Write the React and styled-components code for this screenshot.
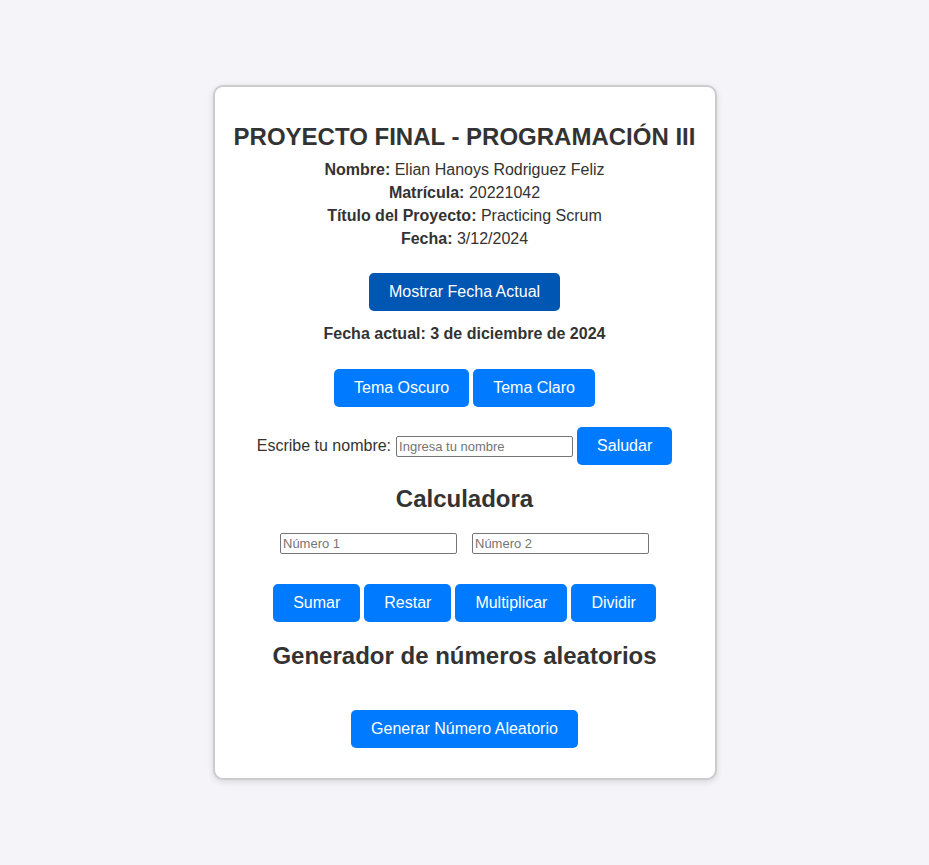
import React from "react";
import styled, { createGlobalStyle } from "styled-components";

const GlobalStyle = createGlobalStyle`
	html, body {
		margin: 0;
		padding: 0;
	}
	body {
		background: #f4f4f9;
		font-family: "Liberation Sans", Arial, sans-serif;
		color: #333;
	}
`;

const App = () => {
	const [fecha, setFecha] = React.useState("3 de diciembre de 2024");
	const [nombre, setNombre] = React.useState("");
	const [n1, setN1] = React.useState("");
	const [n2, setN2] = React.useState("");

	return (
		<Page>
			<GlobalStyle />
			<Card>
				<Title>PROYECTO FINAL - PROGRAMACIÓN III</Title>
				<Info>
					<Line>
						<b>Nombre:</b> Elian Hanoys Rodriguez Feliz
					</Line>
					<Line>
						<b>Matrícula:</b> 20221042
					</Line>
					<Line>
						<b>Título del Proyecto:</b> Practicing Scrum
					</Line>
					<Line>
						<b>Fecha:</b> 3/12/2024
					</Line>
				</Info>

				<Section $top={25}>
					<Button $dark onClick={() => setFecha(fecha)}>
						Mostrar Fecha Actual
					</Button>
				</Section>
				<CurrentDate>Fecha actual: {fecha}</CurrentDate>

				<Row $top={26} $gap={4}>
					<Button>Tema Oscuro</Button>
					<Button>Tema Claro</Button>
				</Row>

				<Row $top={20} $gap={4}>
					<Label htmlFor="nombre">Escribe tu nombre:</Label>
					<Input
						id="nombre"
						placeholder="Ingresa tu nombre"
						value={nombre}
						onChange={(e) => setNombre(e.target.value)}
					/>
					<Button>Saludar</Button>
				</Row>

				<Subtitle $top={20}>Calculadora</Subtitle>
				<Row $top={20} $gap={15}>
					<Input
						placeholder="Número 1"
						value={n1}
						onChange={(e) => setN1(e.target.value)}
					/>
					<Input
						placeholder="Número 2"
						value={n2}
						onChange={(e) => setN2(e.target.value)}
					/>
				</Row>
				<Row $top={30} $gap={4}>
					<Button>Sumar</Button>
					<Button>Restar</Button>
					<Button>Multiplicar</Button>
					<Button>Dividir</Button>
				</Row>

				<Subtitle $top={20}>Generador de números aleatorios</Subtitle>
				<Row $top={40}>
					<Button>Generar Número Aleatorio</Button>
				</Row>
			</Card>
		</Page>
	);
};

const Page = styled.div`
	min-height: 100vh;
	display: flex;
	align-items: center;
	justify-content: center;
`;

const Card = styled.div`
	width: 460px;
	padding: 36px 20px 30px;
	background: #fff;
	border: 2px solid #ccc;
	border-radius: 10px;
	box-shadow: 0 2px 6px rgba(0, 0, 0, 0.12);
	display: flex;
	flex-direction: column;
	align-items: center;
	text-align: center;
`;

const Title = styled.h1`
	margin: 0;
	font-size: 24px;
	line-height: 28px;
	font-weight: bold;
	white-space: nowrap;
`;

const Info = styled.div`
	margin-top: 10px;
	display: flex;
	flex-direction: column;
	gap: 5px;
`;

const Line = styled.p`
	margin: 0;
	font-size: 16px;
	line-height: 18px;
`;

const Section = styled.div`
	margin-top: ${(p) => p.$top || 0}px;
`;

const CurrentDate = styled.p`
	margin: 14px 0 0;
	font-size: 16px;
	line-height: 18px;
	font-weight: bold;
`;

const Row = styled.div`
	margin-top: ${(p) => p.$top || 0}px;
	display: flex;
	align-items: center;
	justify-content: center;
	gap: ${(p) => p.$gap || 0}px;
`;

const Subtitle = styled.h2`
	margin: ${(p) => p.$top || 0}px 0 0;
	font-size: 24px;
	line-height: 28px;
	font-weight: bold;
`;

const Label = styled.label`
	font-size: 16px;
	line-height: 18px;
	margin-right: 1px;
`;

const Input = styled.input`
	box-sizing: border-box;
	width: 177px;
	height: 21px;
	padding: 1px 2px;
	border: 1px solid #767676;
	border-radius: 2px;
	font-family: "Liberation Sans", Arial, sans-serif;
	font-size: 13px;
	color: #333;
	&::placeholder {
		color: #757575;
	}
`;

const Button = styled.button`
	box-sizing: border-box;
	height: 38px;
	padding: 0 20px;
	border: none;
	border-radius: 5px;
	background: ${(p) => (p.$dark ? "#0056b3" : "#007bff")};
	color: #fff;
	font-family: "Liberation Sans", Arial, sans-serif;
	font-size: 16px;
	cursor: pointer;
	&:hover {
		background: #0056b3;
	}
	&:focus {
		outline: none;
	}
`;

export default App;
